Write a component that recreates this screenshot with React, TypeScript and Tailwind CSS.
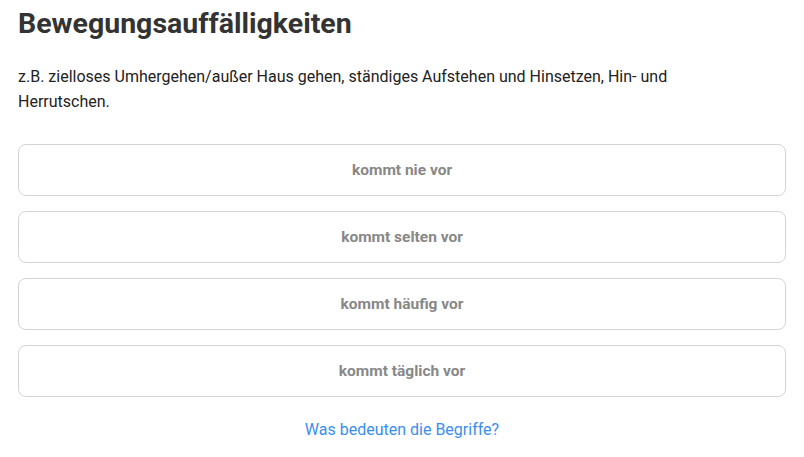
import React from "react";

const options = ["kommt nie vor", "kommt selten vor", "kommt häufig vor", "kommt täglich vor"];

export default function App() {
  return (
    <div className="min-h-[457px] bg-white px-[18px] pt-[5px] text-[#222]" style={{ fontFamily: "Roboto, sans-serif" }}>
      <h1 className="text-[28.5px] font-bold leading-[38px] text-[#333]">Bewegungsauffälligkeiten</h1>
      <p className="mt-[21px] max-w-[700px] text-[16px] leading-[25px] text-[#222]">
        z.B. zielloses Umhergehen/außer Haus gehen, ständiges Aufstehen und Hinsetzen, Hin- und Herrutschen.
      </p>
      <div className="mt-[30px] flex flex-col gap-[15px]">
        {options.map((o) => (
          <button
            key={o}
            className="flex h-[52px] w-full items-center justify-center rounded-[8px] border border-[#d4d4d4] bg-white pt-[2px] text-[15.5px] font-bold text-[#888]"
          >
            {o}
          </button>
        ))}
      </div>
      <div className="mt-[21px] text-center text-[16px] leading-[24px] text-[#3a8ef0]">Was bedeuten die Begriffe?</div>
    </div>
  );
}
